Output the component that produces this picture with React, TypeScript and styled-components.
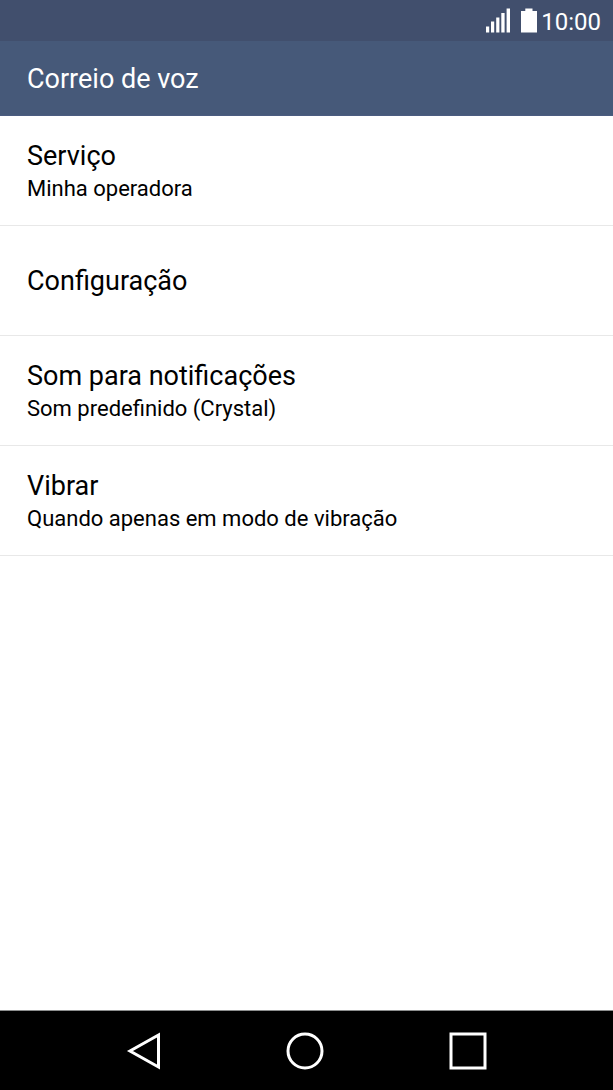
import React from "react";
import styled, { createGlobalStyle } from "styled-components";

const GlobalStyle = createGlobalStyle`
  *, *::before, *::after { box-sizing: border-box; }
  body { margin: 0; background: #fff; font-family: Roboto, sans-serif; color: #000; }
  button { border: 0; padding: 0; background: none; font: inherit; color: inherit; cursor: pointer; }
`;

const Screen = styled.div`
  min-height: 100vh;
  display: flex;
  flex-direction: column;
`;

const StatusBar = styled.div`
  height: 41px;
  padding: 0 12px 0 0;
  display: flex;
  align-items: center;
  justify-content: flex-end;
  background: #414f6d;
  color: #fff;
`;

const StatusIcon = styled.svg`
  display: block;
  margin-right: 10px;
`;

const BatteryIcon = styled.svg`
  display: block;
  margin-right: 4px;
`;

const Clock = styled.time`
  padding-top: 2px;
  font-size: 24px;
  line-height: 28px;
`;

const Header = styled.header`
  height: 75px;
  padding: 2px 27px 0;
  display: flex;
  align-items: center;
  background: #465979;
  border-bottom: 1px solid #4b5c80;
  color: #fff;
`;

const Title = styled.h1`
  margin: 0;
  font-size: 27px;
  line-height: 32px;
  font-weight: 400;
`;

const Main = styled.main`
  flex: 1;
`;

const List = styled.ul`
  margin: 0;
  padding: 0;
  list-style: none;
`;

const Item = styled.li`
  border-bottom: 1px solid #e8e8e8;
`;

const Row = styled.button`
  width: 100%;
  height: 109px;
  padding: 0 27px;
  display: flex;
  flex-direction: column;
  justify-content: center;
  align-items: flex-start;
  text-align: left;
`;

const Label = styled.span`
  font-size: 27px;
  line-height: 36px;
`;

const Value = styled.span`
  font-size: 22px;
  line-height: 30px;
`;

const NavBar = styled.nav`
  height: 80px;
  padding: 0 64px 0 62px;
  display: grid;
  grid-template-columns: repeat(3, 1fr);
  background: #000;
  border-top: 1px solid #8c8e8e;
`;

const NavButton = styled.button`
  display: flex;
  align-items: center;
  justify-content: center;
`;

const settings = [
  { label: "Serviço", value: "Minha operadora" },
  { label: "Configuração" },
  { label: "Som para notificações", value: "Som predefinido (Crystal)" },
  { label: "Vibrar", value: "Quando apenas em modo de vibração" },
];

export default function App() {
  return (
    <>
      <GlobalStyle />
      <Screen>
        <StatusBar>
          <StatusIcon width="25" height="25" viewBox="0 0 25 25" fill="#fff" aria-hidden="true">
            <path d="M0 18.5h3.2v6H0zM5 13.5h3.2v11H5zM10.2 9.5h3.2v15h-3.2zM15.3 5h3.3v19.5h-3.3zM20.6 .5h3.4v24h-3.4z" />
          </StatusIcon>
          <BatteryIcon width="16" height="25" viewBox="0 0 16 25" fill="#fff" aria-hidden="true">
            <path d="M4.3 .5h7.2V3H16v21.5H0V3h4.3z" />
          </BatteryIcon>
          <Clock>10:00</Clock>
        </StatusBar>
        <Header>
          <Title>Correio de voz</Title>
        </Header>
        <Main>
          <List>
            {settings.map(({ label, value }) => (
              <Item key={label}>
                <Row type="button">
                  <Label>{label}</Label>
                  {value && <Value>{value}</Value>}
                </Row>
              </Item>
            ))}
          </List>
        </Main>
        <NavBar>
          <NavButton type="button" aria-label="Voltar">
            <svg width="40" height="40" viewBox="0 0 40 40" fill="none" stroke="#fff" strokeWidth="3">
              <path d="M35.5 4v32L7 20z" />
            </svg>
          </NavButton>
          <NavButton type="button" aria-label="Início">
            <svg width="40" height="40" viewBox="0 0 40 40" fill="none" stroke="#fff" strokeWidth="3">
              <circle cx="20" cy="20" r="17" />
            </svg>
          </NavButton>
          <NavButton type="button" aria-label="Recentes">
            <svg width="40" height="40" viewBox="0 0 40 40" fill="none" stroke="#fff" strokeWidth="3">
              <path d="M3 3h34v34H3z" />
            </svg>
          </NavButton>
        </NavBar>
      </Screen>
    </>
  );
}
